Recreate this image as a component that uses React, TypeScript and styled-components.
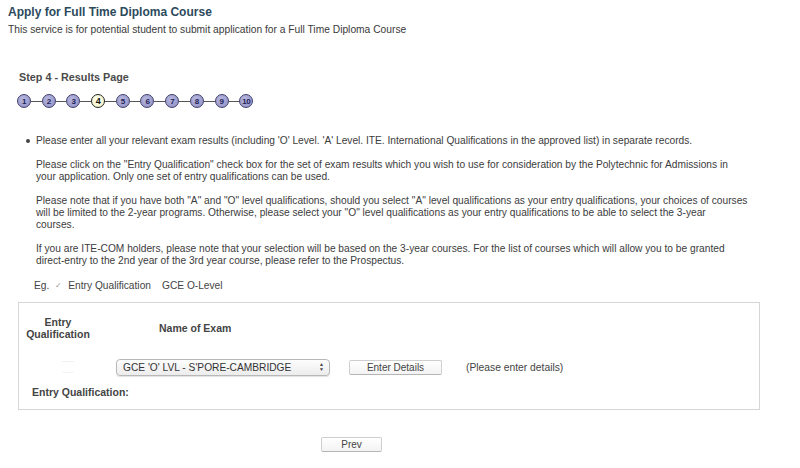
import React from "react";
import styled, { createGlobalStyle } from "styled-components";

const Global = createGlobalStyle`
  html, body { margin: 0; padding: 0; background: #ffffff; }
  body { font-family: "Liberation Sans", Arial, sans-serif; color: #333; }
`;

const Page = styled.div`
  width: 800px;
  height: 468px;
  overflow: hidden;
  background: #fff;
`;

const Header = styled.div`
  padding: 5px 0 0 8px;
`;

const Title = styled.h1`
  margin: 0;
  font-size: 12px;
  line-height: 15px;
  font-weight: bold;
  color: #2c4a5c;
`;

const Subtitle = styled.p`
  margin: 3px 0 0;
  font-size: 10.25px;
  line-height: 14px;
  color: #3a3a3a;
`;

const StepLabel = styled.div`
  margin: 33px 0 0 19px;
  font-size: 10.8px;
  line-height: 14px;
  font-weight: bold;
  color: #4a4a4a;
`;

const Steps = styled.div`
  display: flex;
  align-items: center;
  margin: 10px 0 0 17px;
`;

const Connector = styled.span`
  width: 10.7px;
  height: 1px;
  background: #555;
`;

const Step = styled.span<{ $current?: boolean }>`
  width: 14px;
  height: 14px;
  box-sizing: border-box;
  border-radius: 50%;
  border: 1px solid ${(p) => (p.$current ? "#222" : "#3f3f6a")};
  background: ${(p) =>
    p.$current
      ? "radial-gradient(circle at 40% 35%, #ffffee, #f2f0c0)"
      : "radial-gradient(circle at 40% 35%, #b8b8e0, #8c8cc4)"};
  display: flex;
  align-items: center;
  justify-content: center;
  font-size: ${(p) => (p.$current ? "9px" : "8px")};
  font-weight: bold;
  color: ${(p) => (p.$current ? "#111" : "#222255")};
  letter-spacing: -0.5px;
`;

const Instructions = styled.div`
  margin: 27px 0 0 36px;
  width: 740px;
  font-size: 10.2px;
  line-height: 12px;
  color: #3c3c3c;
`;

const BulletLine = styled.p`
  margin: 0;
  position: relative;
  &::before {
    content: "";
    position: absolute;
    left: -10px;
    top: 4px;
    width: 4px;
    height: 4px;
    border-radius: 50%;
    background: #444;
  }
`;

const Para = styled.p`
  margin: 12px 0 0;
`;

const Example = styled.div`
  display: flex;
  align-items: center;
  gap: 5px;
  margin: 13px 0 0 34px;
  font-size: 10.2px;
  color: #444;
`;

const Check = styled.span`
  width: 9px;
  height: 9px;
  display: inline-flex;
  align-items: center;
  justify-content: center;
  color: #999;
  font-size: 8px;
`;

const ExampleValue = styled.span`
  margin-left: 6px;
`;

const Panel = styled.div`
  margin: 11px 0 0 18px;
  width: 742px;
  height: 108px;
  border: 1px solid #d6d6d6;
  box-sizing: border-box;
`;

const HeadRow = styled.div`
  display: flex;
  align-items: center;
  padding-top: 13px;
  font-size: 10.5px;
  font-weight: bold;
  color: #444;
`;

const HeadCell = styled.div<{ $w?: number; $pad?: number }>`
  width: ${(p) => (p.$w ? `${p.$w}px` : "auto")};
  padding-left: ${(p) => p.$pad || 0}px;
  text-align: ${(p) => (p.$w ? "center" : "left")};
  line-height: 12px;
`;

const DataRow = styled.div`
  display: flex;
  align-items: center;
  margin-top: 18px;
  height: 18px;
`;

const CheckCell = styled.div`
  width: 97px;
  display: flex;
  justify-content: center;
`;

const FaintBox = styled.span`
  width: 12px;
  height: 10px;
  border-top: 1px solid #f0f0f0;
  border-bottom: 1px solid #f4f4f4;
`;

const Select = styled.div`
  width: 214px;
  height: 17px;
  box-sizing: border-box;
  border: 1px solid #b8b8b8;
  border-radius: 4px;
  background: linear-gradient(#fdfdfd, #ececec);
  box-shadow: 0 1px 1px rgba(0, 0, 0, 0.12);
  display: flex;
  align-items: center;
  justify-content: space-between;
  padding: 0 5px 0 6px;
  font-size: 10.2px;
  color: #333;
`;

const Arrows = styled.span`
  display: flex;
  flex-direction: column;
  font-size: 5px;
  line-height: 5px;
  color: #444;
`;

const Button = styled.div<{ $w: number }>`
  width: ${(p) => p.$w}px;
  height: 15px;
  box-sizing: border-box;
  border: 1px solid #cfcfcf;
  border-bottom-color: #b5b5b5;
  border-radius: 2px;
  background: linear-gradient(#ffffff, #f3f3f3);
  display: flex;
  align-items: center;
  justify-content: center;
  font-size: 10px;
  color: #444;
`;

const Note = styled.span`
  margin-left: 24px;
  font-size: 10.3px;
  color: #444;
`;

const FooterLabel = styled.div`
  margin: 10px 0 0 13px;
  font-size: 10.5px;
  font-weight: bold;
  color: #444;
`;

const Gap = styled.span<{ $w: number }>`
  width: ${(p) => p.$w}px;
`;

const Footer = styled.div`
  display: flex;
  justify-content: center;
  margin: 27px 0 0;
  padding-right: 97px;
`;

export default function App() {
  const nums = [1, 2, 3, 4, 5, 6, 7, 8, 9, 10];
  return (
    <Page>
      <Global />
      <Header>
        <Title>Apply for Full Time Diploma Course</Title>
        <Subtitle>
          This service is for potential student to submit application for a Full Time Diploma Course
        </Subtitle>
      </Header>
      <StepLabel>Step 4 - Results Page</StepLabel>
      <Steps>
        {nums.map((n, i) => (
          <React.Fragment key={n}>
            {i > 0 && <Connector />}
            <Step $current={n === 4}>{n}</Step>
          </React.Fragment>
        ))}
      </Steps>
      <Instructions>
        <BulletLine>
          Please enter all your relevant exam results (including 'O' Level. 'A' Level. ITE. International
          Qualifications in the approved list) in separate records.
        </BulletLine>
        <Para>
          Please click on the "Entry Qualification" check box for the set of exam results which you wish to use
          for consideration by the Polytechnic for Admissions in
          <br />
          your application. Only one set of entry qualifications can be used.
        </Para>
        <Para>
          Please note that if you have both "A" and "O" level qualifications, should you select "A" level
          qualifications as your entry qualifications, your choices of courses
          <br />
          will be limited to the 2-year programs. Otherwise, please select your "O" level qualifications as your
          entry qualifications to be able to select the 3-year
          <br />
          courses.
        </Para>
        <Para>
          If you are ITE-COM holders, please note that your selection will be based on the 3-year courses. For the
          list of courses which will allow you to be granted
          <br />
          direct-entry to the 2nd year of the 3rd year course, please refer to the Prospectus.
        </Para>
      </Instructions>
      <Example>
        <span>Eg.</span>
        <Check>✓</Check>
        <span>Entry Qualification</span>
        <ExampleValue>GCE O-Level</ExampleValue>
      </Example>
      <Panel>
        <HeadRow>
          <HeadCell $w={78}>
            Entry
            <br />
            Qualification
          </HeadCell>
          <HeadCell $pad={62}>Name of Exam</HeadCell>
        </HeadRow>
        <DataRow>
          <CheckCell>
            <FaintBox />
          </CheckCell>
          <Select>
            <span>GCE 'O' LVL - S'PORE-CAMBRIDGE</span>
            <Arrows>
              <span>▲</span>
              <span>▼</span>
            </Arrows>
          </Select>
          <Gap $w={19} />
          <Button $w={93}>Enter Details</Button>
          <Note>(Please enter details)</Note>
        </DataRow>
        <FooterLabel>Entry Qualification:</FooterLabel>
      </Panel>
      <Footer>
        <Button $w={61}>Prev</Button>
      </Footer>
    </Page>
  );
}
